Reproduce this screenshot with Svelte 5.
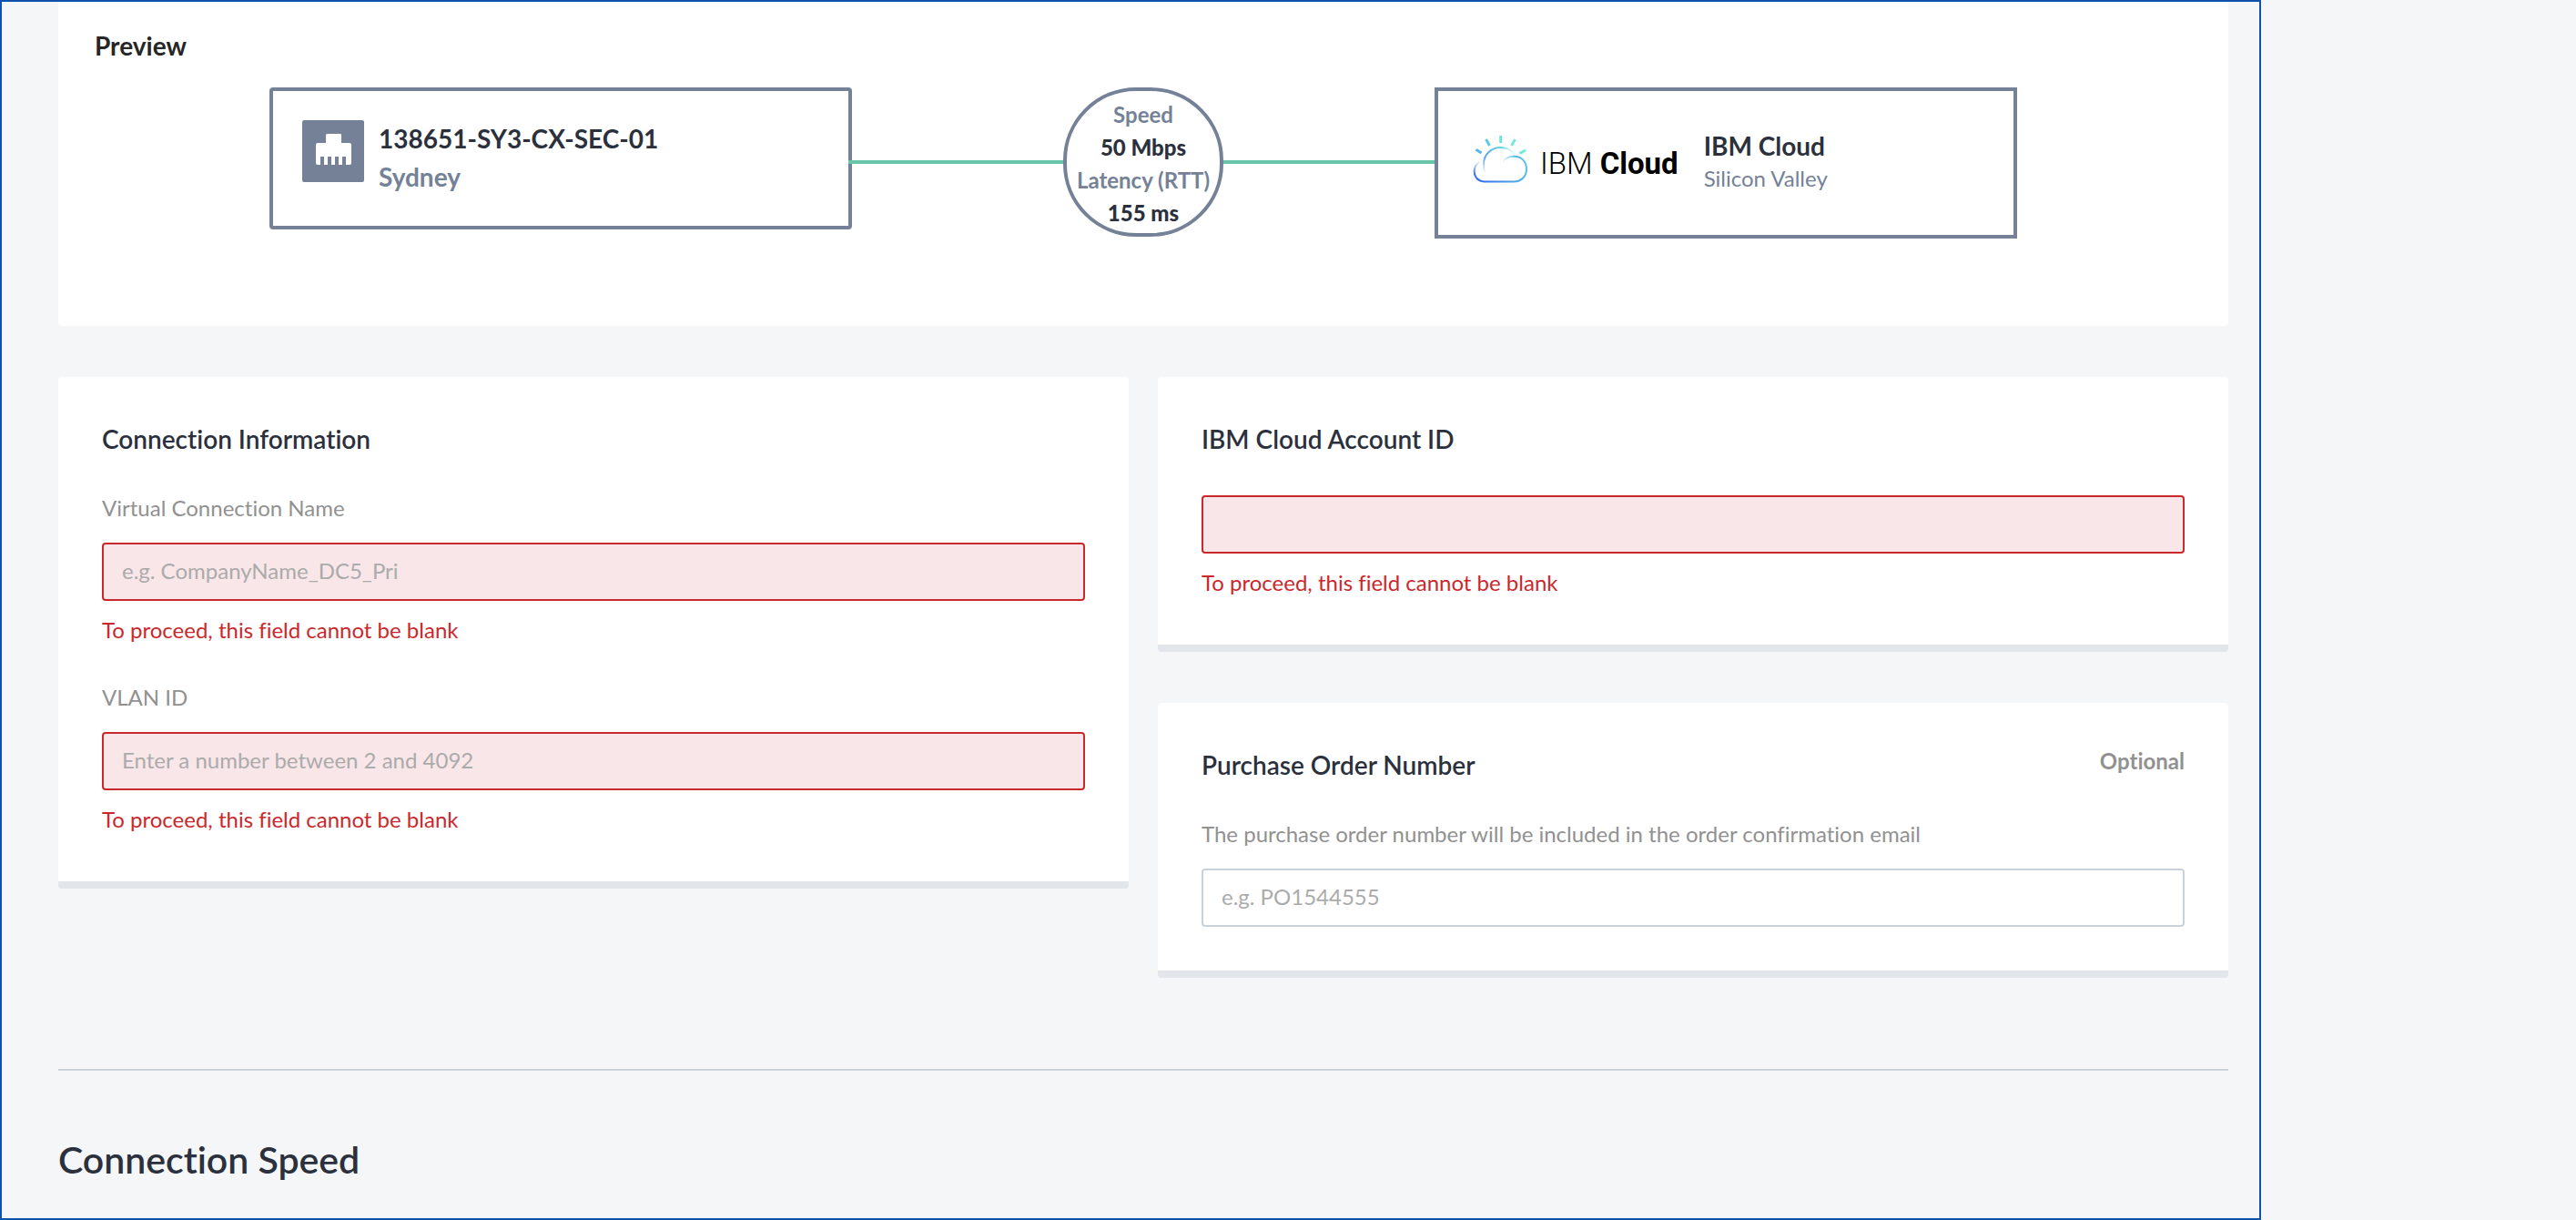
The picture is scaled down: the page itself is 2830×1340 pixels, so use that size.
<script>
  const blankError = 'To proceed, this field cannot be blank';
  const fields = $state([
    { id: 'vc-name', label: 'Virtual Connection Name', placeholder: 'e.g. CompanyName_DC5_Pri', value: '' },
    { id: 'vlan-id', label: 'VLAN ID', placeholder: 'Enter a number between 2 and 4092', value: '' },
  ]);
  let accountId = $state('');
  let purchaseOrder = $state('');
</script>

<main class="page">
  <section class="preview">
    <h2 class="preview-title">Preview</h2>
    <div class="diagram">
      <div class="node port">
        <svg class="port-icon" viewBox="0 0 68 68" aria-hidden="true">
          <rect width="68" height="68" rx="2" fill="#748197" />
          <path
            fill="#fff"
            d="M27 15h15q1 0 1 1v9h9q2 0 2 2v20q0 2-2 2h-4v-9h-4v9h-4v-9h-4v9h-4v-9h-4v9h-4v-9h-4v9h-3q-2 0-2-2V27q0-2 2-2h9v-9q0-1 2-1z"
          />
        </svg>
        <div>
          <div class="node-name">138651-SY3-CX-SEC-01</div>
          <div class="node-place">Sydney</div>
        </div>
      </div>

      <div class="link">
        <div class="wire"></div>
        <div class="metrics">
          <span>Speed</span>
          <strong>50 Mbps</strong>
          <span>Latency (RTT)</span>
          <strong>155 ms</strong>
        </div>
        <div class="wire"></div>
      </div>

      <div class="node cloud">
        <div class="logo">
          <svg class="cloud-icon" viewBox="0 0 60 58" fill="none" stroke-linecap="round" aria-hidden="true">
            <defs>
              <linearGradient id="base" gradientUnits="userSpaceOnUse" x1="2" y1="50" x2="60" y2="26">
                <stop offset="0" stop-color="#2f66f2" />
                <stop offset="1" stop-color="#5fc9e0" />
              </linearGradient>
              <linearGradient id="left" gradientUnits="userSpaceOnUse" x1="2" y1="42" x2="8" y2="29">
                <stop offset="0" stop-color="#3a70f5" />
                <stop offset="1" stop-color="#5f93f6" stop-opacity="0.1" />
              </linearGradient>
              <linearGradient id="dome" gradientUnits="userSpaceOnUse" x1="12" y1="40" x2="45" y2="18">
                <stop offset="0" stop-color="#4a8cf7" stop-opacity="0" />
                <stop offset="0.25" stop-color="#56a5f2" />
                <stop offset="0.8" stop-color="#66d3e2" />
                <stop offset="1" stop-color="#74e5dc" stop-opacity="0.1" />
              </linearGradient>
              <linearGradient id="puff" gradientUnits="userSpaceOnUse" x1="32" y1="29" x2="46" y2="23">
                <stop offset="0" stop-color="#66c6e6" stop-opacity="0" />
                <stop offset="1" stop-color="#66c6e6" />
              </linearGradient>
            </defs>
            <g stroke-width="2">
              <path stroke="url(#left)" d="M7 29C3.500 31.500 1.700 35 1.700 39 1.700 42.500 3 45.500 5 47.500" />
              <path stroke="url(#base)" d="M5 47.500Q8.500 50.500 13.500 50.500H45C53.500 50.500 59 44.500 59 36.500 59 28.500 53.500 22.700 45.500 22.700" />
              <path stroke="url(#puff)" d="M45.500 22.700C40 22.700 35.500 24.500 33 29" />
              <path stroke="url(#dome)" d="M12.700 40C12 37 12 35 12 31 12 21 20 13 30.500 13 37 13 42 15.500 45 19.500" />
            </g>
            <g stroke-width="3" stroke-linecap="butt">
              <path stroke="#55b7ee" d="M3.500 15.300 9.500 19" />
              <path stroke="#5dcbe5" d="M14.500 4 18.500 11" />
              <path stroke="#6be5dc" d="M30.700 0V8" />
              <path stroke="#72ecd9" d="M46.500 4 42.500 11" />
              <path stroke="#72e9db" d="M58 16 51.500 19.500" />
            </g>
          </svg>
          <span class="logo-text">IBM <b>Cloud</b></span>
        </div>
        <div>
          <div class="provider">IBM Cloud</div>
          <div class="region">Silicon Valley</div>
        </div>
      </div>
    </div>
  </section>

  <form class="columns">
    <div class="column">
      <section class="card">
        <h3>Connection Information</h3>
        {#each fields as field (field.id)}
          <div class="field">
            <label for={field.id}>{field.label}</label>
            <input id={field.id} type="text" class="invalid" placeholder={field.placeholder} bind:value={field.value} aria-invalid="true" />
            <p class="error">{blankError}</p>
          </div>
        {/each}
      </section>
    </div>

    <div class="column">
      <section class="card">
        <h3 class="solo"><label class="title-label" for="account-id">IBM Cloud Account ID</label></h3>
        <input id="account-id" type="text" class="invalid" bind:value={accountId} aria-invalid="true" />
        <p class="error">{blankError}</p>
      </section>
      <section class="card">
        <div class="card-head">
          <h3>Purchase Order Number</h3>
          <span class="optional">Optional</span>
        </div>
        <label for="po-number">The purchase order number will be included in the order confirmation email</label>
        <input id="po-number" type="text" placeholder="e.g. PO1544555" bind:value={purchaseOrder} />
      </section>
    </div>
  </form>

  <hr />
  <h1>Connection Speed</h1>
</main>

<style>
  :global(body) {
    background: #f4f6f8;
  }
  .page {
    box-sizing: border-box;
    min-height: 100vh;
    margin-right: 346px;
    padding: 0 34px 0 62px;
    border: 2px solid #0f52ab;
    font-family: Lato, 'Liberation Sans', sans-serif;
    font-variant-ligatures: none;
    font-size: 24px;
    line-height: 36px;
    color: #2b303d;
  }
  h1,
  h2,
  h3,
  p {
    margin: 0;
  }
  .preview {
    padding: 28px 40px 96px;
    border-radius: 0 0 4px 4px;
    background: #fff;
  }
  .preview-title {
    font-size: 28px;
    line-height: 40px;
    color: #262626;
  }
  .diagram {
    display: grid;
    grid-template-columns: repeat(3, 1fr);
    align-items: start;
    margin: 26px 192px 0;
  }
  .node {
    box-sizing: border-box;
    display: flex;
    border: 4px solid #748197;
  }
  .port {
    gap: 16px;
    min-height: 156px;
    padding: 32px;
    border-radius: 4px;
  }
  .port-icon {
    width: 68px;
    height: 68px;
  }
  .node-name,
  .node-place {
    font-size: 28px;
    line-height: 40px;
    font-weight: 700;
  }
  .node-place {
    line-height: 44px;
    color: #748197;
  }
  .link {
    display: flex;
    align-items: center;
  }
  .wire {
    flex: 1;
    height: 4px;
    background: #69c5a7;
  }
  .wire:first-child {
    box-shadow: -4px 0 #69c5a7;
  }
  .metrics {
    box-sizing: border-box;
    display: flex;
    flex-direction: column;
    align-items: center;
    width: 176px;
    padding: 8px 0 4px;
    border: 4px solid #748197;
    border-radius: 80px;
    font-weight: 700;
    color: #748197;
    white-space: nowrap;
  }
  .metrics strong {
    color: #2b303d;
  }
  .cloud {
    align-items: center;
    gap: 28px;
    min-height: 166px;
    padding: 0 38px 2px;
  }
  .logo {
    display: flex;
    align-items: center;
    gap: 14px;
  }
  .cloud-icon {
    width: 60px;
    height: 58px;
  }
  .logo-text {
    padding-top: 4px;
    font-family: Roboto, 'Liberation Sans', sans-serif;
    font-size: 33px;
    font-weight: 300;
    color: #000;
    white-space: nowrap;
  }
  .logo-text b {
    font-weight: 700;
  }
  .provider {
    font-size: 28px;
    font-weight: 700;
  }
  .region {
    color: #748197;
  }
  .columns {
    display: grid;
    grid-template-columns: 1fr 1fr;
    gap: 32px;
    margin-top: 56px;
  }
  .column {
    display: flex;
    flex-direction: column;
    gap: 56px;
  }
  .card {
    padding: 48px;
    border-bottom: 8px solid #e2e6eb;
    border-radius: 4px;
    background: #fff;
  }
  h3 {
    margin-bottom: 38px;
    font-size: 28px;
    line-height: 40px;
    font-weight: 600;
  }
  h3.solo {
    margin-bottom: 42px;
  }
  .field + .field {
    margin-top: 36px;
  }
  label {
    display: block;
    margin-bottom: 20px;
    color: #919191;
  }
  .title-label {
    margin: 0;
    line-height: 40px;
    color: inherit;
  }
  input {
    display: block;
    box-sizing: border-box;
    width: 100%;
    height: 64px;
    padding: 0 20px 4px;
    border: 2px solid #cbd1d8;
    border-radius: 4px;
    background: #fff;
    font: inherit;
    color: #2b303d;
  }
  input::placeholder {
    color: #ababab;
    opacity: 1;
  }
  .invalid {
    border-color: #c9282d;
    background: #f8e6e8;
  }
  .error {
    margin-top: 12px;
    line-height: 40px;
    color: #c9282d;
  }
  .card-head {
    display: flex;
    justify-content: space-between;
  }
  .optional {
    line-height: 32px;
    font-weight: 700;
    color: #919191;
  }
  hr {
    margin: 100px 0 72px;
    border: 0;
    border-top: 2px solid #cbd1d8;
  }
  h1 {
    font-size: 41px;
    line-height: 52px;
    font-weight: 600;
  }
</style>
